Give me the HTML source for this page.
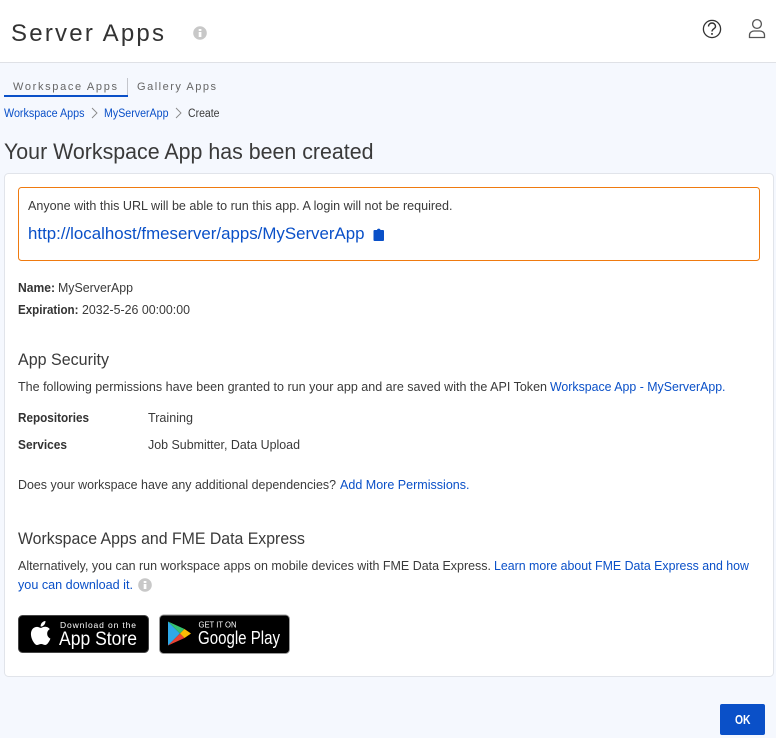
<!DOCTYPE html>
<html lang="en">
<head>
<meta charset="utf-8">
<title>Server Apps</title>
<style>
html,body{margin:0;padding:0;width:776px;height:738px;overflow:hidden;background:#f5f8fe;}
svg{position:absolute;left:0;top:0;display:block;}
text{font-family:"Liberation Sans",Arial,sans-serif;font-size:12.500px;fill:#3a3a3a;}
.l{fill:#0a50c8;}
.b{font-weight:bold;fill:#333;}
</style>
</head>
<body>
<svg width="776" height="738" viewBox="0 0 776 738" xmlns="http://www.w3.org/2000/svg">
<!-- header -->
<rect x="0" y="0" width="776" height="62" fill="#fff"/>
<rect x="0" y="62" width="776" height="1" fill="#dfe1e6"/>
<text x="11" y="41" style="font-size:24px;fill:#333" textLength="153" lengthAdjust="spacing">Server Apps</text>
<circle cx="200" cy="33" r="6.8" fill="#c8c8c8"/>
<rect x="198.700" y="32" width="2.700" height="5" fill="#fff"/><rect x="198.700" y="29" width="2.700" height="2" fill="#fff"/>
<!-- help -->
<circle cx="712" cy="29" r="8.600" fill="none" stroke="#333" stroke-width="1.300"/>
<path d="M708.500 26.500a3.500 3.500 0 0 1 7 0c0 2.300-3.500 2.400-3.500 5" fill="none" stroke="#333" stroke-width="1.400"/>
<rect x="711.200" y="33" width="1.600" height="1.800" fill="#333"/>
<!-- user -->
<circle cx="757" cy="24" r="4.400" fill="none" stroke="#555" stroke-width="1.300"/>
<path d="M749.500 37.500v-2.500c0-2.600 2.600-4 4.500-4h6c1.900 0 4.500 1.400 4.500 4v2.500z" fill="none" stroke="#555" stroke-width="1.300"/>
<!-- tabs -->
<text x="13" y="90" style="font-size:11px;fill:#666" textLength="104" lengthAdjust="spacing">Workspace Apps</text>
<rect x="127" y="78" width="1" height="17" fill="#c4c6cc"/>
<rect x="4" y="95" width="124" height="2" fill="#0a50c8"/>
<text x="137" y="90" style="font-size:11px;fill:#666" textLength="79" lengthAdjust="spacing">Gallery Apps</text>
<!-- breadcrumb -->
<text class="l" x="4" y="117" style="font-size:11.500px" textLength="80.500" lengthAdjust="spacingAndGlyphs">Workspace Apps</text>
<path d="M92 108l5 5-5 5" fill="none" stroke="#888" stroke-width="0.9"/>
<text class="l" x="104" y="117" style="font-size:11.500px" textLength="64.500" lengthAdjust="spacingAndGlyphs">MyServerApp</text>
<path d="M176 108l5 5-5 5" fill="none" stroke="#888" stroke-width="0.9"/>
<text x="188" y="117" style="font-size:11.500px" textLength="31.500" lengthAdjust="spacingAndGlyphs">Create</text>
<!-- title -->
<text x="4" y="159" style="font-size:22px;fill:#3a3a3a" textLength="369.500" lengthAdjust="spacingAndGlyphs">Your Workspace App has been created</text>
<!-- card -->
<rect x="4.500" y="173.500" width="769" height="503" rx="4" fill="#fff" stroke="#e1e4ea"/>
<rect x="18.500" y="187.500" width="741" height="73" rx="3" fill="#fff" stroke="#ef7a0f"/>
<text x="28" y="210" textLength="424.500" lengthAdjust="spacingAndGlyphs">Anyone with this URL will be able to run this app. A login will not be required.</text>
<text class="l" x="28" y="239" style="font-size:16.500px" textLength="336.500" lengthAdjust="spacingAndGlyphs">http://localhost/fmeserver/apps/MyServerApp</text>
<path d="M374.500 230h2.500a1.800 1.800 0 0 1 3.500 0h2.500a1 1 0 0 1 1 1v9a1 1 0 0 1-1 1h-8.500a1 1 0 0 1-1-1v-9a1 1 0 0 1 1-1z" fill="#0a50c8"/>
<text class="b" x="18" y="292" textLength="37" lengthAdjust="spacingAndGlyphs">Name:</text>
<text x="58" y="292" textLength="75" lengthAdjust="spacingAndGlyphs">MyServerApp</text>
<text class="b" x="18" y="314" textLength="60.500" lengthAdjust="spacingAndGlyphs">Expiration:</text>
<text x="82" y="314" textLength="108" lengthAdjust="spacingAndGlyphs">2032-5-26 00:00:00</text>
<text x="18" y="365" style="font-size:16.500px" textLength="91" lengthAdjust="spacingAndGlyphs">App Security</text>
<text x="18" y="391" textLength="529" lengthAdjust="spacingAndGlyphs">The following permissions have been granted to run your app and are saved with the API Token</text>
<text class="l" x="550" y="391" textLength="175.500" lengthAdjust="spacingAndGlyphs">Workspace App - MyServerApp.</text>
<text class="b" x="18" y="422" textLength="71" lengthAdjust="spacingAndGlyphs">Repositories</text>
<text x="148" y="422" textLength="45" lengthAdjust="spacingAndGlyphs">Training</text>
<text class="b" x="18" y="449" textLength="49" lengthAdjust="spacingAndGlyphs">Services</text>
<text x="148" y="449" textLength="152" lengthAdjust="spacingAndGlyphs">Job Submitter, Data Upload</text>
<text x="18" y="489" textLength="318" lengthAdjust="spacingAndGlyphs">Does your workspace have any additional dependencies?</text>
<text class="l" x="340" y="489" textLength="129.500" lengthAdjust="spacingAndGlyphs">Add More Permissions.</text>
<text x="18" y="544" style="font-size:16.500px" textLength="287" lengthAdjust="spacingAndGlyphs">Workspace Apps and FME Data Express</text>
<text x="18" y="570" textLength="473" lengthAdjust="spacingAndGlyphs">Alternatively, you can run workspace apps on mobile devices with FME Data Express.</text>
<text class="l" x="494" y="570" textLength="255" lengthAdjust="spacingAndGlyphs">Learn more about FME Data Express and how</text>
<text class="l" x="18" y="589" textLength="115" lengthAdjust="spacingAndGlyphs">you can download it.</text>
<circle cx="145" cy="585" r="6.800" fill="#c8c8c8"/>
<rect x="143.700" y="584" width="2.700" height="5" fill="#fff"/><rect x="143.700" y="581" width="2.700" height="2" fill="#fff"/>
<!-- App Store -->
<rect x="18.500" y="615.500" width="130" height="37" rx="4" fill="#000" stroke="#444"/>
<path transform="translate(26.300 618.600) scale(1.200)" d="M18.710 19.500c-.83 1.240-1.710 2.450-3.050 2.470-1.340.03-1.770-.79-3.290-.79-1.530 0-2 .77-3.270.82-1.310.05-2.300-1.320-3.140-2.530C4.250 17 2.940 12.450 4.700 9.390c.87-1.520 2.430-2.480 4.120-2.510 1.280-.02 2.500.87 3.290.87.78 0 2.260-1.070 3.800-.91.65.03 2.470.26 3.640 1.980-.09.06-2.170 1.280-2.150 3.810.03 3.020 2.650 4.030 2.680 4.040-.03.07-.42 1.440-1.380 2.830M13 3.500c.73-.83 1.940-1.460 2.940-1.500.13 1.170-.34 2.350-1.040 3.190-.69.85-1.830 1.510-2.950 1.420-.15-1.150.41-2.350 1.050-3.110z" fill="#fff"/>
<text x="60" y="628" style="font-size:8.500px;fill:#fff" textLength="76" lengthAdjust="spacing">Download on the</text>
<text x="59" y="645" style="font-size:19px;fill:#fff" textLength="78" lengthAdjust="spacingAndGlyphs">App Store</text>
<!-- Google Play -->
<rect x="159.500" y="615" width="130" height="38.500" rx="4" fill="#000" stroke="#9a9a9a"/>
<path d="M168 621.500v24l12-12z" fill="#2fa9e8"/>
<path d="M168 621.500l12 12 4.500-4.500z" fill="#35c26f"/>
<path d="M168 645.500l12-12 4.500 4.500z" fill="#ea4335"/>
<path d="M184.500 629l6.500 4.500-6.500 4.500-4.500-4.500z" fill="#fbbc04"/>
<text x="198.500" y="627.500" style="font-size:8px;fill:#fff" textLength="38" lengthAdjust="spacingAndGlyphs">GET IT ON</text>
<text x="198" y="644" style="font-size:18px;fill:#fff" textLength="82" lengthAdjust="spacingAndGlyphs">Google Play</text>
<!-- OK -->
<rect x="720" y="704" width="45" height="31" rx="2" fill="#0a50c8"/>
<text x="735" y="724" style="font-size:12.500px;font-weight:bold;fill:#fff" textLength="15.500" lengthAdjust="spacingAndGlyphs">OK</text>
</svg>
</body>
</html>
